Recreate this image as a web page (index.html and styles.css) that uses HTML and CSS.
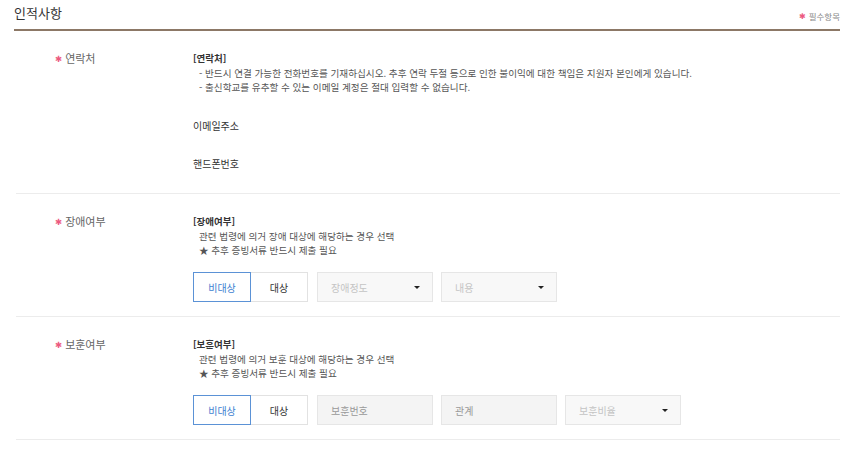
FILE: index.html
```html
<!DOCTYPE html>
<html lang="ko">
<head>
<meta charset="utf-8">
<title>인적사항</title>
<link rel="stylesheet" href="styles.css">
</head>
<body>
<div class="section">
  <div class="sec-head">
    <h2 class="sec-title">인적사항</h2>
    <span class="req-note"><span class="star">✱</span>필수항목</span>
  </div>

  <div class="row">
    <div class="label"><span class="star">✱</span>연락처</div>
    <div class="content">
      <div class="desc-title">[연락처]</div>
      <div class="desc">- 반드시 연결 가능한 전화번호를 기재하십시오. 추후 연락 두절 등으로 인한 불이익에 대한 책임은 지원자 본인에게 있습니다.</div>
      <div class="desc">- 출신학교를 유추할 수 있는 이메일 계정은 절대 입력할 수 없습니다.</div>
      <div class="fields">
        <div class="field">이메일주소</div>
        <div class="field">핸드폰번호</div>
      </div>
    </div>
  </div>

  <div class="row">
    <div class="label"><span class="star">✱</span>장애여부</div>
    <div class="content">
      <div class="desc-title">[장애여부]</div>
      <div class="desc">관련 법령에 의거 장애 대상에 해당하는 경우 선택</div>
      <div class="desc">★ 추후 증빙서류 반드시 제출 필요</div>
      <div class="controls">
        <div class="toggle">
          <span class="tbtn active">비대상</span>
          <span class="tbtn">대상</span>
        </div>
        <div class="select">장애정도<span class="caret"></span></div>
        <div class="select">내용<span class="caret"></span></div>
      </div>
    </div>
  </div>

  <div class="row">
    <div class="label"><span class="star">✱</span>보훈여부</div>
    <div class="content">
      <div class="desc-title">[보훈여부]</div>
      <div class="desc">관련 법령에 의거 보훈 대상에 해당하는 경우 선택</div>
      <div class="desc">★ 추후 증빙서류 반드시 제출 필요</div>
      <div class="controls">
        <div class="toggle">
          <span class="tbtn active">비대상</span>
          <span class="tbtn">대상</span>
        </div>
        <div class="input">보훈번호</div>
        <div class="input">관계</div>
        <div class="select">보훈비율<span class="caret"></span></div>
      </div>
    </div>
  </div>
</div>
</body>
</html>
```
FILE: styles.css
```css
* { box-sizing: border-box; }
html, body { margin: 0; padding: 0; background: #fff; }
body {
  font-family: "Noto Sans CJK KR", "Noto Sans", sans-serif;
  color: #333;
}
.section {
  width: 826px;
  margin-left: 14px;
}
.sec-head {
  display: flex;
  justify-content: space-between;
  align-items: flex-start;
  height: 31px;
  border-bottom: 2px solid #8c7866;
}
.sec-title {
  margin: 5px 0 0 0;
  font-size: 13px;
  font-weight: 400;
  line-height: 16px;
  color: #333;
}
.req-note {
  margin-top: 10px;
  font-size: 8.5px;
  line-height: 12px;
  color: #888;
}
.star {
  font-family: "DejaVu Sans", sans-serif;
  color: #ec5a80;
  margin-right: 3px;
  font-size: 8px;
  vertical-align: 1px;
}
.row {
  display: flex;
  margin-left: 2px;
  padding: 20px 0 14px 39px;
  border-bottom: 1px solid #ececec;
}
.label {
  width: 138px;
  flex: none;
  font-size: 11px;
  line-height: 15px;
  color: #666;
}
.label .star { margin-right: 3px; font-size: 8.5px; }
.content {
  flex: 1;
}
.desc-title {
  font-size: 9.5px;
  line-height: 15px;
  font-weight: 700;
  color: #333;
}
.desc {
  font-size: 9.6px;
  line-height: 14px;
  color: #555;
  padding-left: 6px;
}
.fields {
  margin-top: 12px;
  margin-bottom: -3px;
}
.field {
  height: 38px;
  display: flex;
  align-items: center;
  font-size: 10px;
  color: #333;
}
.controls {
  display: flex;
  gap: 8px;
  margin-top: 15px;
}
.toggle {
  display: flex;
  margin-right: 1px;
}
.tbtn {
  width: 58px;
  height: 30px;
  display: flex;
  align-items: center;
  justify-content: center;
  font-size: 10px;
  color: #333;
  border: 1px solid #e2e2e2;
  background: #fff;
}
.tbtn + .tbtn { border-left: none; width: 57px; }
.tbtn.active {
  color: #3d7fd1;
  border-color: #5b92d6;
}
.select, .input {
  width: 116px;
  height: 30px;
  display: flex;
  align-items: center;
  justify-content: space-between;
  padding: 0 12px 0 13px;
  font-size: 10px;
  color: #bbb;
  background: #f6f6f6;
  border: 1px solid #e6e6e6;
}
.select { background: #f8f8f8; color: #c4c4c4; }
.input { color: #999; background: #f4f4f4; }
.caret {
  width: 0;
  height: 0;
  border-left: 3px solid transparent;
  border-right: 3px solid transparent;
  border-top: 3px solid #222;
}
```
